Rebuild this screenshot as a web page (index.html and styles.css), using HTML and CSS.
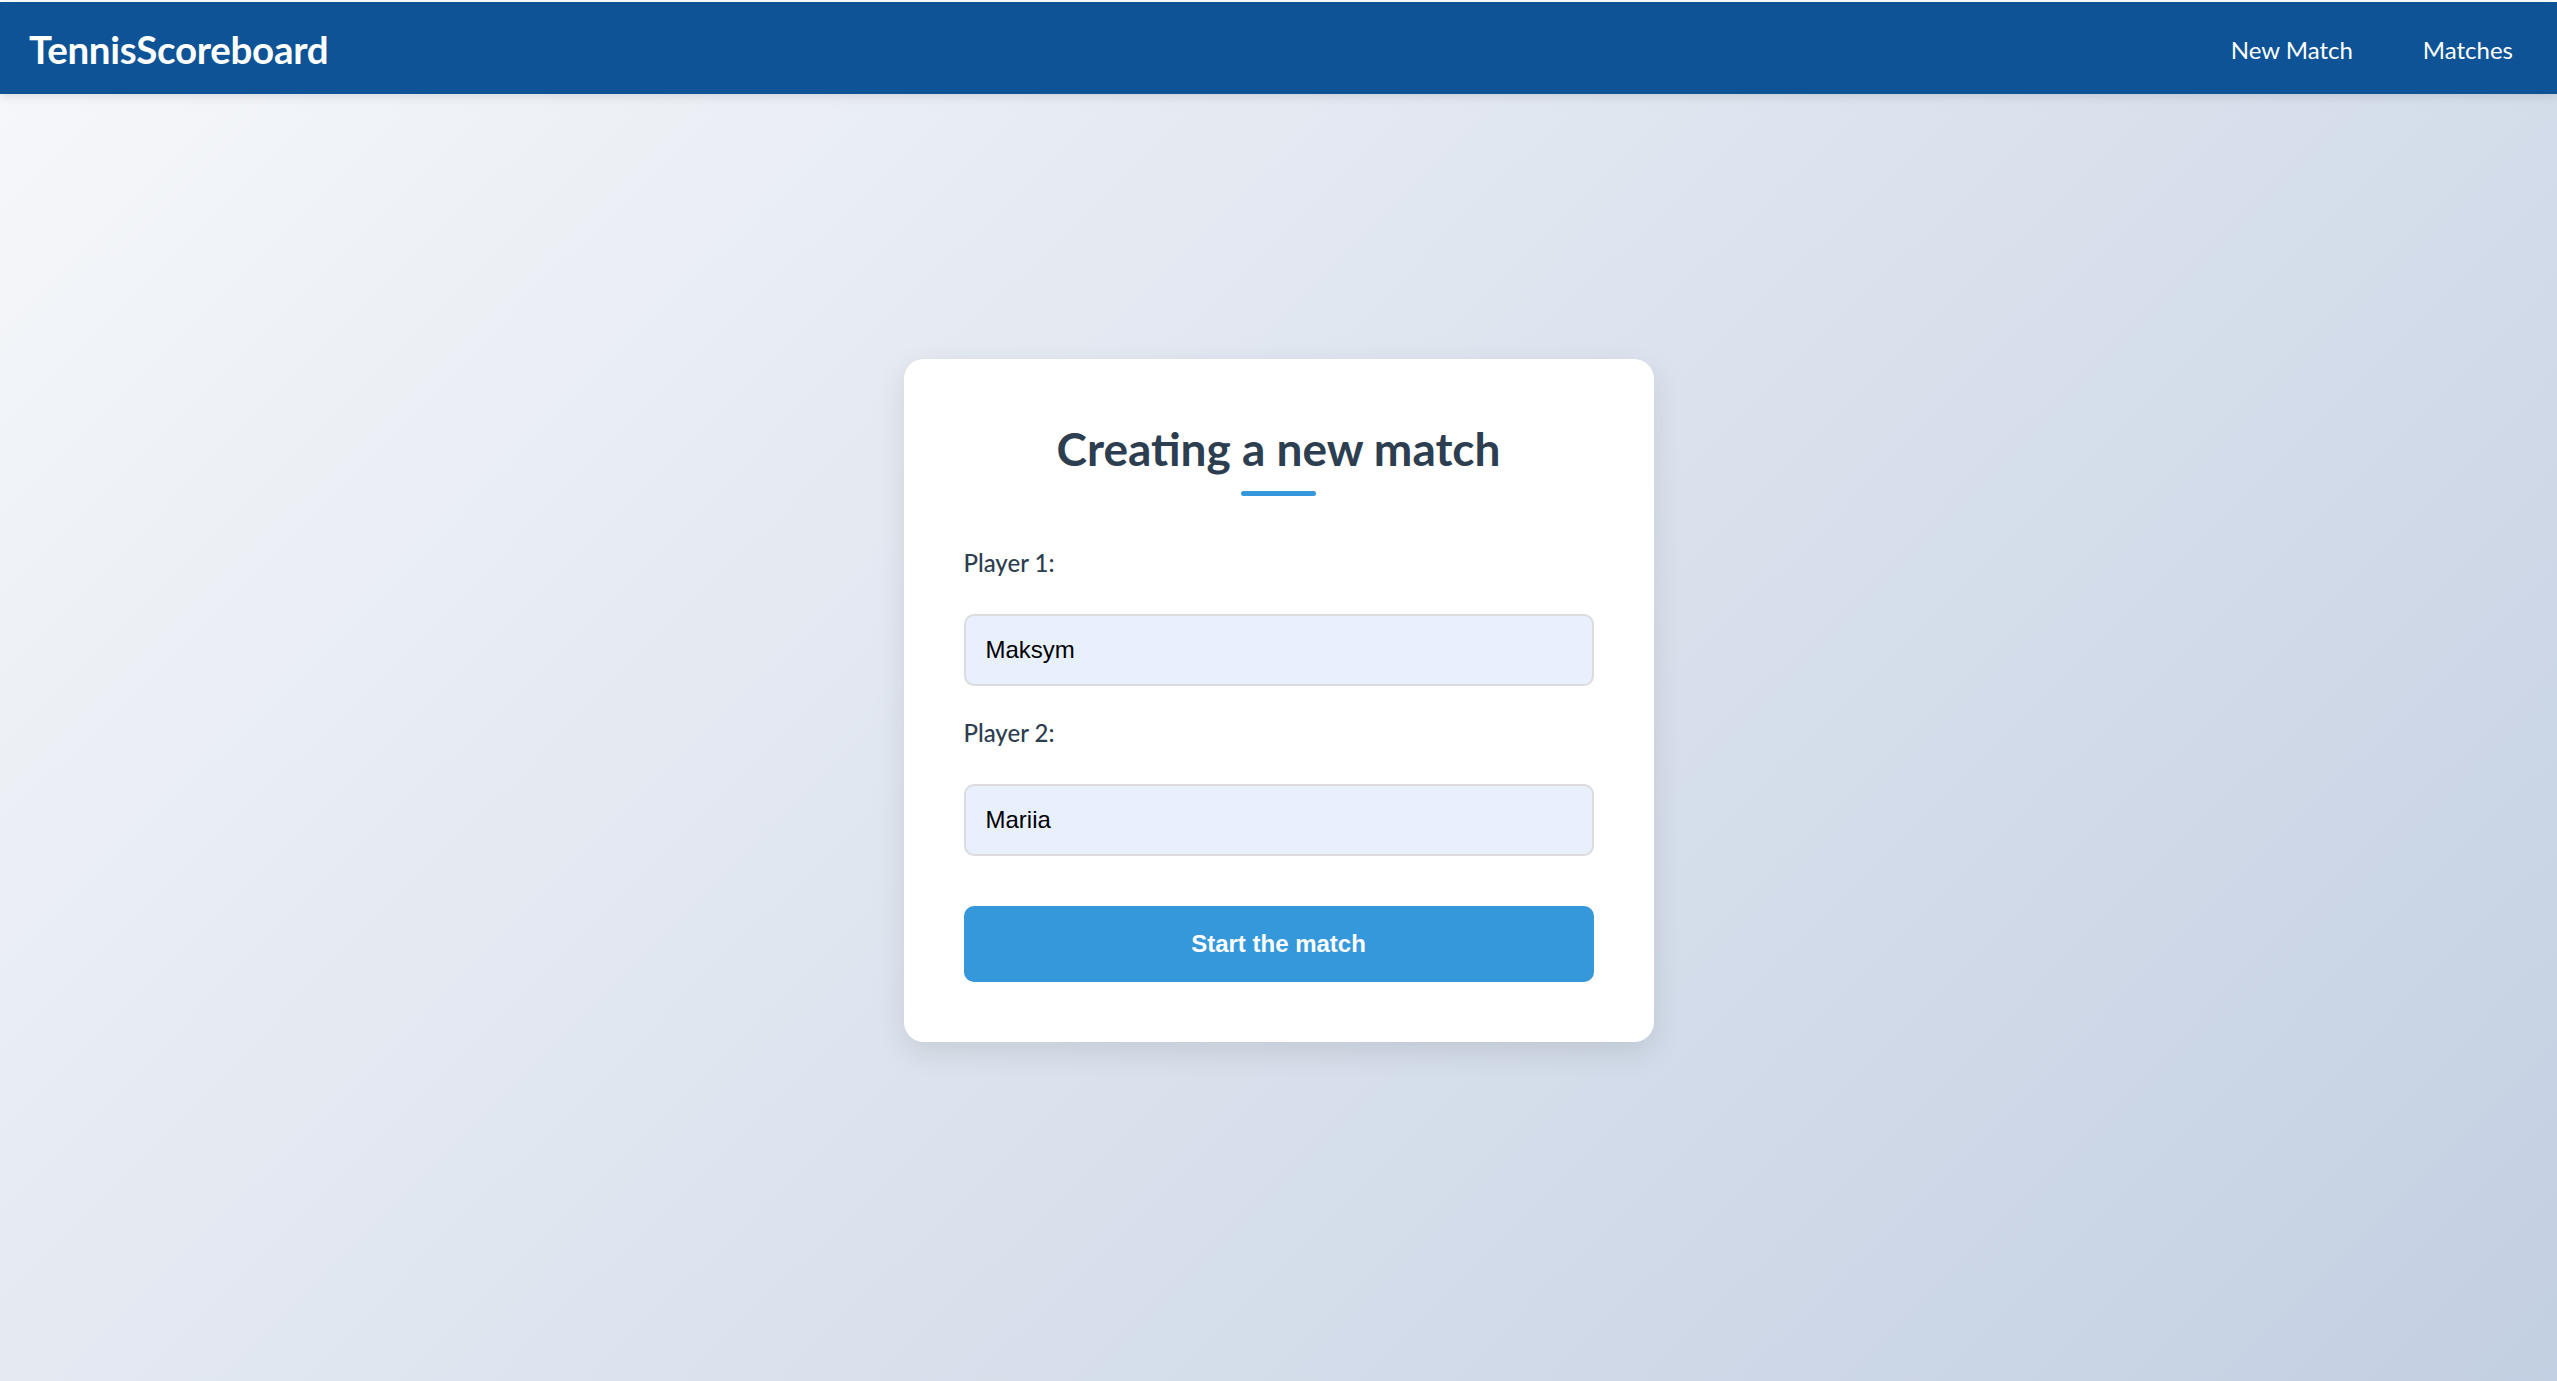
FILE: index.html
```html
<!DOCTYPE html>
<html lang="en">
<head>
<meta charset="UTF-8">
<title>Tennis Scoreboard</title>
<link rel="stylesheet" href="styles.css">
</head>
<body>
<header class="topbar">
  <div class="logo">TennisScoreboard</div>
  <nav class="nav">
    <a href="#" class="nav-link">New Match</a>
    <a href="#" class="nav-link">Matches</a>
  </nav>
</header>
<main class="main">
  <section class="card">
    <h1 class="title">Creating a new match</h1>
    <div class="title-line"></div>
    <form class="form">
      <div class="group">
        <label class="label" for="p1">Player 1:</label>
        <input class="input" id="p1" type="text" value="Maksym">
      </div>
      <div class="group">
        <label class="label" for="p2">Player 2:</label>
        <input class="input" id="p2" type="text" value="Mariia">
      </div>
      <button type="button" class="btn">Start the match</button>
    </form>
  </section>
</main>
</body>
</html>
```

FILE: styles.css
```css
* { box-sizing: border-box; }
html { background: #ffffff; }
body {
  margin: 0;
  padding-top: 2px;
  min-height: 100vh;
  font-family: "Segoe UI", Lato, "Noto Sans", sans-serif;
}
.main {
  background: linear-gradient(135deg, #f5f7fa 0%, #c3cfe2 100%);
  min-height: calc(100vh - 94px);
  display: flex;
  justify-content: center;
  align-items: flex-start;
  padding-top: 265px;
}
.topbar {
  height: 92px;
  background: #0d5396;
  display: flex;
  align-items: center;
  justify-content: space-between;
  padding: 2px 44px 0 29px;
  box-shadow: 0 2px 10px rgba(0,0,0,0.12);
  position: relative;
  z-index: 1;
}
.logo {
  color: #ffffff;
  font-weight: 700;
  font-size: 38.5px;
  letter-spacing: -0.3px;
}
.nav { display: flex; gap: 70px; }
.nav-link {
  color: #ffffff;
  text-decoration: none;
  font-size: 24px;
}
.card {
  width: 750px;
  background: #ffffff;
  border-radius: 20px;
  padding: 60px;
  box-shadow: 0 10px 30px rgba(0,0,0,0.1);
}
.title {
  margin: 0;
  text-align: center;
  color: #2c3e50;
  font-size: 46px;
  font-weight: 700;
  line-height: 60px;
}
.title-line {
  width: 75px;
  height: 5px;
  background: #3498db;
  border-radius: 3px;
  margin: 12px auto 51px;
}
.group { margin-bottom: 31px; }
.label {
  display: block;
  color: #2c3e50;
  font-size: 24px;
  line-height: 32px;
  font-weight: 500;
  margin-bottom: 35px;
}
.input {
  display: block;
  width: 100%;
  height: 72px;
  border: 2px solid #dcdcdc;
  border-radius: 10px;
  background: #e8f0fe;
  padding: 0 20px;
  font-family: "Liberation Sans", Arial, sans-serif;
  font-size: 24px;
  color: #000000;
}
.btn {
  display: block;
  width: 100%;
  height: 76px;
  margin-top: 50px;
  border: none;
  border-radius: 10px;
  background: #3498db;
  color: #ffffff;
  font-family: "Liberation Sans", Arial, sans-serif;
  font-weight: 700;
  font-size: 24px;
}
.form .group:last-of-type { margin-bottom: 0; }
```
